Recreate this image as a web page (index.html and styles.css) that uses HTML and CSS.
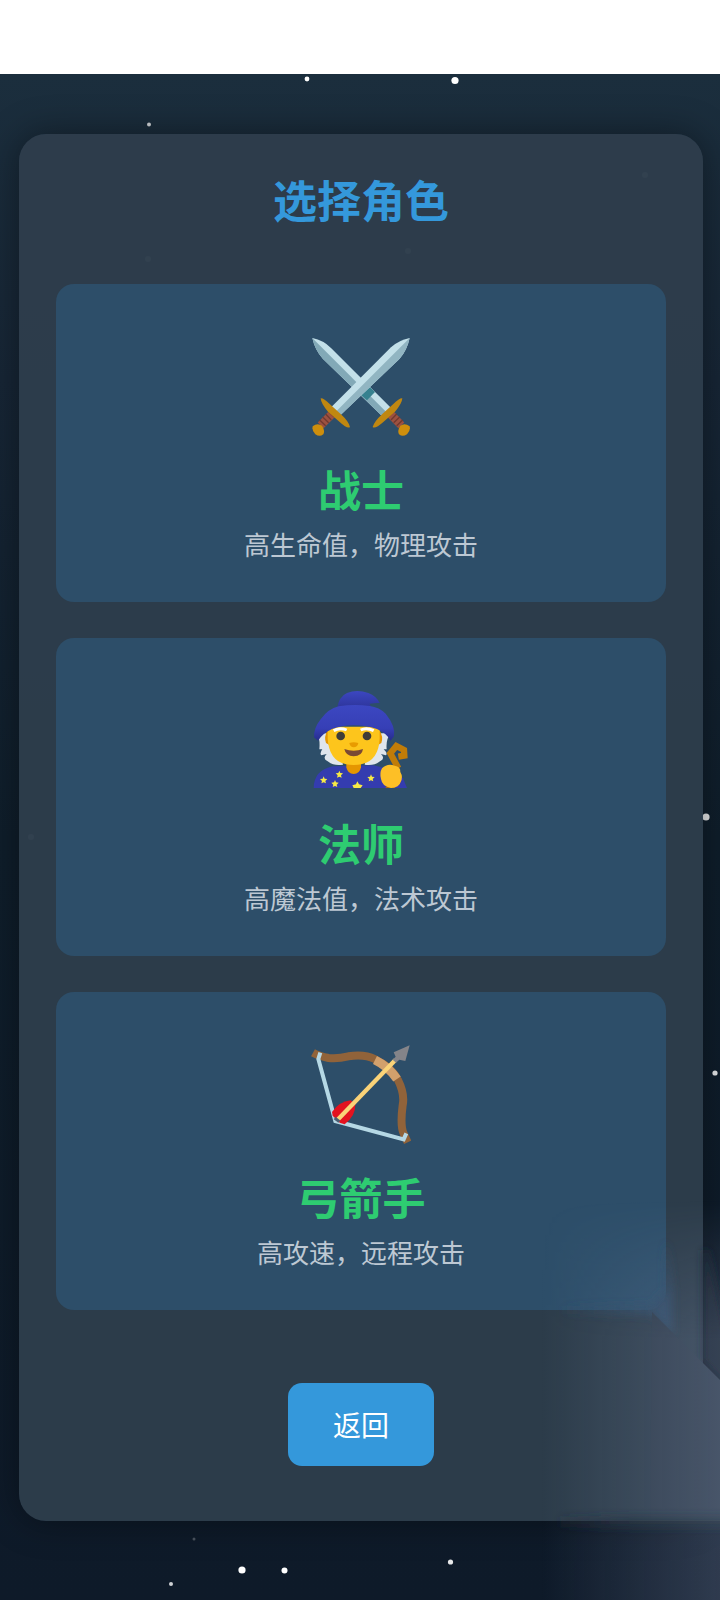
FILE: index.html
```html
<!DOCTYPE html>
<html lang="zh-CN">
<head>
    <meta charset="UTF-8">
    <meta name="viewport" content="width=device-width, initial-scale=1.0">
    <title>选择角色</title>
    <link rel="stylesheet" href="styles.css">
</head>
<body>

<div class="status-bar"></div>

<div class="game">
    <!-- stars -->
    <svg class="stars" viewBox="0 74 720 1526" preserveAspectRatio="xMidYMin slice" fill="#fff" aria-hidden="true">
        <circle cx="307" cy="79" r="2.4"/>
        <circle cx="455" cy="80.5" r="3.6"/>
        <circle cx="149" cy="124.5" r="2" opacity=".8"/>
        <circle cx="706" cy="817" r="3.6" opacity=".9"/>
        <circle cx="715" cy="1073" r="2.6" opacity=".9"/>
        <circle cx="242" cy="1570" r="3.6"/>
        <circle cx="284.5" cy="1570.5" r="3"/>
        <circle cx="450.5" cy="1562" r="2.6" opacity=".9"/>
        <circle cx="171" cy="1584" r="2" opacity=".8"/>
        <circle cx="194" cy="1539" r="1.5" opacity=".25"/>
        <g opacity=".5">
            <circle cx="645" cy="175" r="3"/>
            <circle cx="148" cy="259" r="3"/>
            <circle cx="408" cy="251" r="3"/>
            <circle cx="196" cy="584" r="3"/>
            <circle cx="611" cy="644" r="3"/>
            <circle cx="148" cy="755" r="3"/>
            <circle cx="31" cy="837" r="3"/>
            <circle cx="275" cy="1121" r="3"/>
            <circle cx="99" cy="1272" r="3"/>
        </g>
    </svg>

    <main class="panel">
        <h1>选择角色</h1>

        <div class="role-list">
            <section class="role">
                <svg class="role-icon" viewBox="92 75 300 300" aria-hidden="true">
                    <path d="M96 81 Q130 88 152 111 L330 289 L305 315 L128 144 Q104 118 96 81Z" fill="#c3e0e9"/>
                    <path d="M96 81 L317 302 L305 315 L128 144 Q104 118 96 81Z" fill="#82a9b7"/>
                    <path d="M260 268 L284 243 L268 228 L243 253Z" fill="#36818f"/>
                    <path d="M388 81 Q354 88 332 109 L154 287 L180 313 L358 143 Q380 118 388 81Z" fill="#c3e0e9"/>
                    <path d="M388 81 L168 301 L180 313 L358 143 Q380 118 388 81Z" fill="#91b5c2"/>
                    <path d="M155 309 L121 343" stroke="#9c5141" stroke-width="25"/>
                    <path d="M144 301 L162 318 M136 309 L153 327 M127 318 L145 335 M118 327 L136 344" stroke="#70392f" stroke-width="4"/>
                    <path d="M330 309 L363 343" stroke="#9c5141" stroke-width="25"/>
                    <path d="M341 301 L323 318 M349 309 L332 327 M358 318 L340 335 M367 327 L349 344" stroke="#70392f" stroke-width="4"/>
                    <path d="M121 262 Q130 261 148 279 L181 309 Q205 331 209 348 Q202 355 178 333 L143 302 Q122 278 121 262Z" fill="#c08710"/>
                    <path d="M366 262 Q357 261 339 279 L306 309 Q282 331 277 348 Q284 355 309 333 L344 302 Q365 278 366 262Z" fill="#c08710"/>
                    <path d="M97 346 Q111 334 125 344 Q135 357 129 370 Q118 379 105 370 Q94 359 97 346Z" fill="#ce8e0c"/>
                    <path d="M388 346 Q373 334 360 344 Q350 357 356 370 Q367 379 380 370 Q391 359 388 346Z" fill="#ce8e0c"/>
                </svg>
                <h2>战士</h2>
                <p>高生命值，物理攻击</p>
            </section>

            <section class="role">
                <svg class="role-icon" viewBox="94 60 300 300" aria-hidden="true">
                    <defs>
                        <linearGradient id="hat" x1="0" y1="0" x2="0" y2="1">
                            <stop offset="0" stop-color="#3c47c1"/>
                            <stop offset=".65" stop-color="#363fb6"/>
                            <stop offset="1" stop-color="#262c8c"/>
                        </linearGradient>
                        <linearGradient id="hatTip" x1="0" y1="0" x2="0" y2="1">
                            <stop offset="0" stop-color="#3c47c1"/>
                            <stop offset="1" stop-color="#2d3499"/>
                        </linearGradient>
                        <path id="star" d="M0 -11 L3 -4 L11 -3 L5 3 L7 10 L0 7 L-7 10 L-5 3 L-11 -3 L-3 -4Z" fill="#f7ea45"/>
                    </defs>
                    <path d="M102 354 Q103 300 160 289 L280 286 Q340 296 370 325 L382 354Z" fill="#343caf"/>
                    <path d="M200 270 H244 V292 Q240 312 222 312 Q204 312 200 292Z" fill="#e59600"/>
                    <path d="M112 190 Q122 208 119 238 L128 238 Q119 250 125 256 L141 252 Q127 266 144 274 Q160 288 190 284 L170 190Z" fill="#dfe5ec"/>
                    <path d="M333 190 Q318 208 321 238 L312 238 Q325 250 319 256 L304 252 Q318 266 301 274 Q285 288 255 284 L275 190Z" fill="#dfe5ec"/>
                    <path d="M144 180 Q132 200 139 219 L149 225 V180Z M299 180 Q312 200 305 219 L295 225 V180Z" fill="#e59600"/>
                    <path d="M144 170 H300 V206 Q296 285 222 285 Q149 285 144 206Z" fill="#fdc51c"/>
                    <path d="M162 182 Q181 171 201 180 M243 180 Q261 171 282 182" stroke="#fff" stroke-width="9" fill="none"/>
                    <circle cx="183" cy="198" r="13" fill="#403d38"/>
                    <circle cx="262" cy="198" r="13" fill="#403d38"/>
                    <path d="M209 219 Q222 214 236 219 Q233 232 222 232 Q212 232 209 219Z" fill="#e89b00"/>
                    <path d="M194 237 Q222 247 250 237 Q247 259 222 259 Q198 258 194 237Z" fill="#7a4934"/>
                    <path d="M172 116 Q178 79 202 69 Q232 57 266 69 Q290 78 300 99 Q289 98 270 101 L276 116Z" fill="url(#hatTip)"/>
                    <path d="M103 202 Q102 174 123 148 Q146 116 177 109 Q222 102 270 108 Q299 112 318 131 Q348 168 343 199 L333 212 Q306 166 222 166 Q146 166 115 212Z" fill="url(#hat)"/>
                    <path d="M356 295 L332 250 L350 228 L373 240 L374 257 L356 260" fill="none" stroke="#c07c08" stroke-width="19"/>
                    <path d="M316 350 H345 V354 H320Z" fill="#ae6a08"/>
                    <path d="M307 295 Q323 279 345 287 Q363 289 362 306 Q371 321 363 336 Q359 353 334 354 Q307 349 304 327 Q299 309 307 295Z" fill="#fdbf26"/>
                    <use href="#star" x="132" y="330"/>
                    <use href="#star" x="179" y="313"/>
                    <use href="#star" x="166" y="341"/>
                    <use href="#star" x="274" y="324"/>
                    <path d="M233 334 L238 343 L249 346 L243 354 H222 L218 346 L229 343Z" fill="#f7ea45"/>
                </svg>
                <h2>法师</h2>
                <p>高魔法值，法术攻击</p>
            </section>

            <section class="role">
                <svg class="role-icon" viewBox="92 70 300 300" aria-hidden="true">
                    <path d="M98 96 Q116 106 145 112 Q172 115 204 107 Q253 100 283 115 Q337 142 353 178 Q374 220 367 254 Q359 315 370 339 L382 365" fill="none" stroke="#91633a" stroke-width="24"/>
                    <path d="M284 118 Q325 138 350 175" fill="none" stroke="#d2a06c" stroke-width="27"/>
                    <path d="M120 96 L114 115 L165 301 L370 356 L378 338" fill="none" stroke="#b5d8e5" stroke-width="12"/>
                    <path d="M155 274 Q176 243 211 239 L225 251 Q226 286 193 311 L178 306 L157 285Z" fill="#e3121f"/>
                    <path d="M169 300 L345 118" stroke="#fad378" stroke-width="13"/>
                    <path d="M163 292 L177 303" stroke="#4b5d73" stroke-width="9"/>
                    <path d="M388 74 L340 95 L346 108 L337 117 L347 126 L357 117 L375 121Z" fill="#848489"/>
                </svg>
                <h2>弓箭手</h2>
                <p>高攻速，远程攻击</p>
            </section>
        </div>

        <button type="button" class="back-btn">返回</button>
    </main>

    <!-- light in the lower right corner -->
    <svg class="glow" viewBox="0 0 180 400" aria-hidden="true">
        <defs>
            <linearGradient id="glowX">
                <stop offset="0" stop-color="#b4c0e8" stop-opacity="0"/>
                <stop offset="1" stop-color="#b4c0e8" stop-opacity=".2"/>
            </linearGradient>
            <linearGradient id="fadeY" x1="0" y1="0" x2="0" y2="1">
                <stop offset="0" stop-color="#000"/>
                <stop offset=".35" stop-color="#fff"/>
            </linearGradient>
            <linearGradient id="shadeX" gradientUnits="userSpaceOnUse" x1="0" y1="0" x2="180" y2="0">
                <stop offset="0" stop-color="#1b2936" stop-opacity="0"/>
                <stop offset=".5" stop-color="#1b2936" stop-opacity=".8"/>
                <stop offset="1" stop-color="#1b2936" stop-opacity=".8"/>
            </linearGradient>
            <linearGradient id="cardX" gradientUnits="userSpaceOnUse" x1="20" y1="0" x2="110" y2="0">
                <stop offset="0" stop-color="#2d4a64" stop-opacity="0"/>
                <stop offset="1" stop-color="#2d4a64"/>
            </linearGradient>
            <mask id="fade"><rect width="180" height="400" fill="url(#fadeY)"/></mask>
            <filter id="soft" filterUnits="userSpaceOnUse" x="-20" y="-20" width="240" height="440">
                <feGaussianBlur stdDeviation="4"/>
            </filter>
        </defs>
        <path d="M163 50 V160 L190 190 V150 L168 50Z" fill="#15222f" filter="url(#soft)"/>
        <path d="M20 106 H112 L126 90 V40 L132 90 V136 L112 114 H20Z" fill="url(#cardX)" filter="url(#soft)"/>
        <path d="M112 112 L180 180 V321 H110Z" fill="#2d3b4a"/>
        <path d="M20 322 H220" stroke="url(#shadeX)" stroke-width="11" filter="url(#soft)"/>
        <rect width="180" height="400" fill="url(#glowX)" mask="url(#fade)"/>
    </svg>
</div>

</body>
</html>
```

FILE: styles.css
```css
* {
    box-sizing: border-box;
}
body {
    margin: 0;
    font-family: "Noto Sans CJK SC", sans-serif;
    background-color: #0d1a28;
}
.status-bar {
    height: 74px;
    background-color: white;
}
.game {
    position: relative;
    overflow: hidden;
    padding: 60px 17px 79px 19px;
    background: linear-gradient(to bottom, #1b2e3d 0%, #172636 20%, #0f1e2b 50%, #0e1a29 100%);
}
.stars {
    position: absolute;
    top: 0;
    left: 0;
    width: 100%;
    height: 100%;
}
.panel {
    position: relative;
    display: flex;
    flex-direction: column;
    align-items: center;
    padding: 33px 37px 55px;
    border-radius: 27px;
    background-color: rgba(46, 61, 76, 0.96);
    box-shadow: 0 0 36px rgba(0, 0, 0, 0.4);
}
h1 {
    margin: 0 0 53px;
    font-size: 44px;
    line-height: 64px;
    color: #3498db;
}
.role-list {
    display: flex;
    flex-direction: column;
    gap: 36px;
    width: 100%;
}
.role {
    display: flex;
    flex-direction: column;
    align-items: center;
    padding: 52px 36px 38px;
    border-radius: 18px;
    background-color: #2d4e69;
}
.role-icon {
    width: 100px;
    height: 100px;
}
h2 {
    margin: 22px 0 6px;
    font-size: 43px;
    line-height: 60px;
    color: #2ecc71;
}
p {
    margin: 0;
    font-size: 26px;
    line-height: 40px;
    color: #bdc8d3;
}
.back-btn {
    margin-top: 73px;
    padding: 20px 45px 21px;
    border: none;
    border-radius: 14px;
    font-family: inherit;
    font-size: 28px;
    line-height: 42px;
    color: white;
    background-color: #3498db;
    cursor: pointer;
}
.glow {
    position: absolute;
    right: 0;
    bottom: 0;
    width: 180px;
    height: 400px;
    pointer-events: none;
}
```
